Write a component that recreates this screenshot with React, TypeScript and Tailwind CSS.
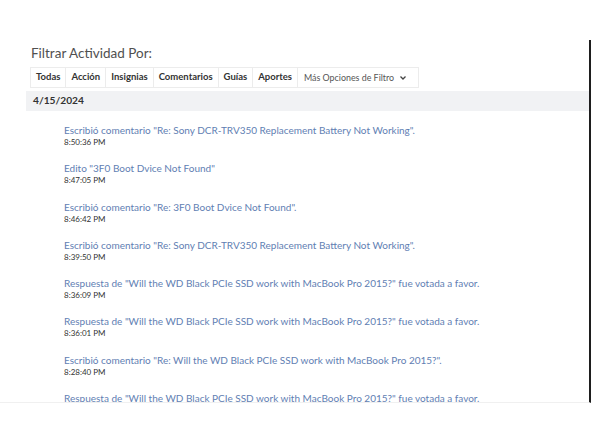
import React from "react";

const items = [
  { t: 'Escribió comentario "Re: Sony DCR-TRV350 Replacement Battery Not Working".', time: "8:50:36 PM" },
  { t: 'Edito "3F0 Boot Dvice Not Found"', time: "8:47:05 PM" },
  { t: 'Escribió comentario "Re: 3F0 Boot Dvice Not Found".', time: "8:46:42 PM" },
  { t: 'Escribió comentario "Re: Sony DCR-TRV350 Replacement Battery Not Working".', time: "8:39:50 PM" },
  { t: 'Respuesta de "Will the WD Black PCIe SSD work with MacBook Pro 2015?" fue votada a favor.', time: "8:36:09 PM" },
  { t: 'Respuesta de "Will the WD Black PCIe SSD work with MacBook Pro 2015?" fue votada a favor.', time: "8:36:01 PM" },
  { t: 'Escribió comentario "Re: Will the WD Black PCIe SSD work with MacBook Pro 2015?".', time: "8:28:40 PM" },
  { t: 'Respuesta de "Will the WD Black PCIe SSD work with MacBook Pro 2015?" fue votada a favor.', time: "" },
];

const tabs = ["Todas", "Acción", "Insignias", "Comentarios", "Guías", "Aportes"];

export default function App() {
  return (
    <div className="w-[592px] h-[444px] bg-white overflow-hidden" style={{ fontFamily: 'Lato, "Noto Sans", sans-serif' }}>
      <div className="mt-[40px] h-[363px] w-[591px] border-r-2 border-[#1e1e1e] border-b border-b-[#f0f0f0] overflow-hidden">
        <div className="pl-[31px] pt-[3px] text-[13.5px] leading-[20px] text-[#505050]">Filtrar Actividad Por:</div>
        <div className="mt-[4px] ml-[30px] flex h-[21px] items-stretch whitespace-nowrap">
          {tabs.map((t) => (
            <div key={t} className="flex items-center px-[5px] border border-[#ececec] -ml-px first:ml-0 bg-white text-[9.5px] font-bold text-[#333]">
              {t}
            </div>
          ))}
          <div className="flex items-center w-[122px] pl-[6px] pr-[11px] justify-between border border-[#ececec] -ml-px bg-white text-[8.9px] text-[#555]">
            <span>Más Opciones de Filtro</span>
            <svg width="8" height="6" viewBox="0 0 8 6" className="mt-px">
              <path d="M1.5 1.5 L4 4 L6.5 1.5" stroke="#444" strokeWidth="1.3" fill="none" />
            </svg>
          </div>
        </div>
        <div className="mt-[3px] ml-[26px] h-[20px] bg-[#f1f2f4] flex items-center pl-[7px] text-[10.2px] font-bold text-[#333]">4/15/2024</div>
        <div className="pl-[64px] pt-[12px]">
          {items.map((it, i) => (
            <div key={i} className="h-[38.3px] whitespace-nowrap">
              <div className="text-[10px] leading-[14px] text-[#5f80b3]">{it.t}</div>
              <div className="text-[8px] leading-[11px] text-[#333]">{it.time}</div>
            </div>
          ))}
        </div>
      </div>
    </div>
  );
}
